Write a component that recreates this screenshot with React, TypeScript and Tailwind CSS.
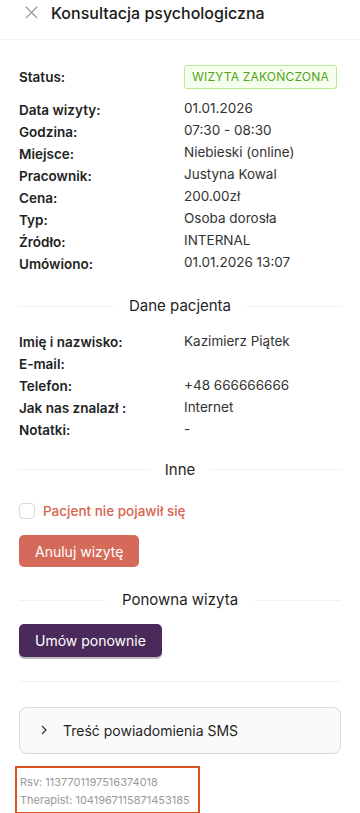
import React from 'react';

const visitRows: [string, string][] = [
  ['Data wizyty:', '01.01.2026'],
  ['Godzina:', '07:30 - 08:30'],
  ['Miejsce:', 'Niebieski (online)'],
  ['Pracownik:', 'Justyna Kowal'],
  ['Cena:', '200.00zł'],
  ['Typ:', 'Osoba dorosła'],
  ['Źródło:', 'INTERNAL'],
  ['Umówiono:', '01.01.2026 13:07'],
];

const patientRows: [string, string][] = [
  ['Imię i nazwisko:', 'Kazimierz Piątek'],
  ['E-mail:', ''],
  ['Telefon:', '+48 666666666'],
  ['Jak nas znalazł :', 'Internet'],
  ['Notatki:', '-'],
];

const Row = ({ label, value }: { label: string; value: string }) => (
  <div className="flex h-[22px] items-center">
    <div className="w-[165px] shrink-0 text-[13.5px] font-semibold text-[#222]">{label}</div>
    <div className="-mt-[3px] text-[13.5px] text-[#333]">{value}</div>
  </div>
);

const Divider = ({ title }: { title: string }) => (
  <div className="flex items-center gap-4">
    <div className="h-px flex-1 bg-[#f0f0f0]" />
    <span className="text-[15px] text-[#1f1f1f]">{title}</span>
    <div className="h-px flex-1 bg-[#f0f0f0]" />
  </div>
);

export default function App() {
  return (
    <div className="min-h-[813px] bg-white" style={{ fontFamily: 'Inter, "Noto Sans", sans-serif' }}>
      {/* header */}
      <div className="flex h-[40px] items-center gap-[12px] border-b border-[#f0f0f0] pl-[24px]">
        <svg width="15" height="15" viewBox="0 0 16 16" className="-mt-[14px] text-[#8c8c8c]">
          <path d="M2 2 L14 14 M14 2 L2 14" stroke="currentColor" strokeWidth="1.3" fill="none" />
        </svg>
        <h1 className="-mt-[14px] text-[16px] font-medium text-[#1a1a1a]">Konsultacja psychologiczna</h1>
      </div>

      <div className="px-[19px]">
        {/* status */}
        <div className="mt-[25px] flex items-center">
          <div className="w-[165px] shrink-0 text-[13.5px] font-semibold text-[#222]">Status:</div>
          <span className="whitespace-nowrap rounded-[3px] border border-[#b7eb8f] bg-[#f6ffed] px-[7px] py-[2px] text-[12px] tracking-[0.2px] text-[#52a41a]">
            WIZYTA ZAKOŃCZONA
          </span>
        </div>

        <div className="mt-[10px] flex flex-col">
          {visitRows.map(([l, v]) => (
            <Row key={l} label={l} value={v} />
          ))}
        </div>

        <div className="mt-[20px]">
          <Divider title="Dane pacjenta" />
        </div>

        <div className="mt-[14px] flex flex-col">
          {patientRows.map(([l, v]) => (
            <Row key={l} label={l} value={v} />
          ))}
        </div>

        <div className="mt-[17px]">
          <Divider title="Inne" />
        </div>

        <label className="mt-[20px] flex items-center gap-[8px]">
          <span className="h-[16px] w-[16px] rounded-[4px] border border-[#d9d9d9] bg-white" />
          <span className="text-[13.5px] font-medium text-[#d9634f]">Pacjent nie pojawił się</span>
        </label>

        <button className="mt-[14px] h-[32px] rounded-[5px] bg-[#d66a5a] px-[16px] text-[14px] text-white">
          Anuluj wizytę
        </button>

        <div className="mt-[22px]">
          <Divider title="Ponowna wizyta" />
        </div>

        <button className="mt-[12px] h-[33px] rounded-[5px] bg-[#4a2a5a] px-[16px] text-[14px] text-white shadow-[0_2px_0_rgba(0,0,0,0.25)]">
          Umów ponownie
        </button>

        <div className="mt-[24px] h-px bg-[#f0f0f0]" />

        <div className="mt-[25px] flex h-[47px] items-center gap-[14px] rounded-[8px] border border-[#d9d9d9] bg-[#fafafa] pl-[19px]">
          <svg width="10" height="10" viewBox="0 0 10 10" className="text-[#333]">
            <path d="M3 1 L7 5 L3 9" stroke="currentColor" strokeWidth="1.2" fill="none" />
          </svg>
          <span className="text-[14px] text-[#1f1f1f]">Treść powiadomienia SMS</span>
        </div>
      </div>

      <div className="ml-[15px] mt-[12px] w-[185px] border-2 border-[#d9541e] px-[3px] pb-[3px] pt-[5px] text-[11px] leading-[18px] text-[#9a9a9a]">
        <div>Rsv: 1137701197516374018</div>
        <div>Therapist: 1041967115871453185</div>
      </div>
    </div>
  );
}
